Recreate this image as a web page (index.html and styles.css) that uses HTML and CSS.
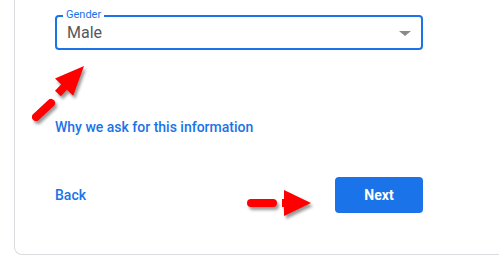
FILE: index.html
```html
<!DOCTYPE html>
<html lang="en">
<head>
<meta charset="utf-8">
<title>Gender</title>
<link rel="stylesheet" href="styles.css">
</head>
<body>
<div class="card">
  <div class="content">
    <div class="field">
      <span class="field-label">Gender</span>
      <span class="field-value">Male</span>
      <span class="caret"></span>
    </div>
    <a class="info-link" href="#">Why we ask for this information</a>
    <div class="actions">
      <a class="back" href="#">Back</a>
      <button class="next" type="button">Next</button>
    </div>
  </div>
</div>
<svg class="annotations" width="499" height="266" viewBox="0 0 499 266" aria-hidden="true">
  <g class="arrow">
    <line x1="36" y1="117" x2="51" y2="103" stroke="#ff0000" stroke-width="8" stroke-linecap="round"/>
    <line x1="57.9" y1="93.6" x2="64.6" y2="86.5" stroke="#ff0000" stroke-width="8"/>
    <polygon points="84,66 55,78.5 73.2,95.7" fill="#ff0000"/>
  </g>
  <g class="arrow">
    <line x1="251" y1="203" x2="273" y2="203" stroke="#ff0000" stroke-width="8" stroke-linecap="round"/>
    <rect x="282" y="199" width="4" height="8" fill="#ff0000"/>
    <polygon points="284,190 311,203 284,216" fill="#ff0000"/>
  </g>
</svg>
</body>
</html>
```
FILE: styles.css
```css
html, body {
  margin: 0;
  padding: 0;
  overflow: hidden;
  background: #ffffff;
}

body {
  position: relative;
  width: 499px;
  height: 266px;
  font-family: Roboto, "Liberation Sans", Arial, sans-serif;
}

.card {
  margin-left: 14px;
  width: 485px;
  border-left: 1px solid #dadce0;
  border-bottom: 1px solid #dadce0;
  border-bottom-left-radius: 8px;
  padding: 15px 0 41px 40px;
  box-sizing: border-box;
}

.content {
  width: 368px;
  display: flex;
  flex-direction: column;
  align-items: flex-start;
}

.field {
  position: relative;
  box-sizing: border-box;
  width: 368px;
  height: 35px;
  border: 2px solid #1a73e8;
  border-radius: 4px;
  display: flex;
  align-items: center;
  padding: 0 10px;
}

.field-label {
  position: absolute;
  left: 6px;
  top: -8px;
  padding: 0 3px;
  background: #ffffff;
  font-size: 11px;
  line-height: 12px;
  color: #1a73e8;
}

.field-value {
  flex: 1;
  font-size: 16px;
  line-height: 20px;
  color: #55585c;
}

.caret {
  width: 0;
  height: 0;
  border-left: 6px solid transparent;
  border-right: 6px solid transparent;
  border-top: 5px solid #8a8a8a;
  margin-top: 1px;
}

.info-link {
  margin-top: 67px;
  font-size: 14px;
  line-height: 20px;
  font-weight: 500;
  color: #1a73e8;
  text-decoration: none;
}

.actions {
  margin-top: 40px;
  width: 368px;
  display: flex;
  justify-content: space-between;
  align-items: center;
}

.back {
  font-size: 14px;
  line-height: 20px;
  font-weight: 500;
  color: #1a73e8;
  text-decoration: none;
}

.next {
  width: 88px;
  height: 36px;
  border: none;
  border-radius: 4px;
  background: #1a73e8;
  color: #ffffff;
  font-family: Roboto, "Liberation Sans", Arial, sans-serif;
  font-size: 14px;
  font-weight: 700;
  padding: 0;
}

.annotations {
  position: absolute;
  left: 0;
  top: 0;
  pointer-events: none;
}

.arrow {
  filter: drop-shadow(2px 3px 1.5px rgba(0, 0, 0, 0.4));
}
```
